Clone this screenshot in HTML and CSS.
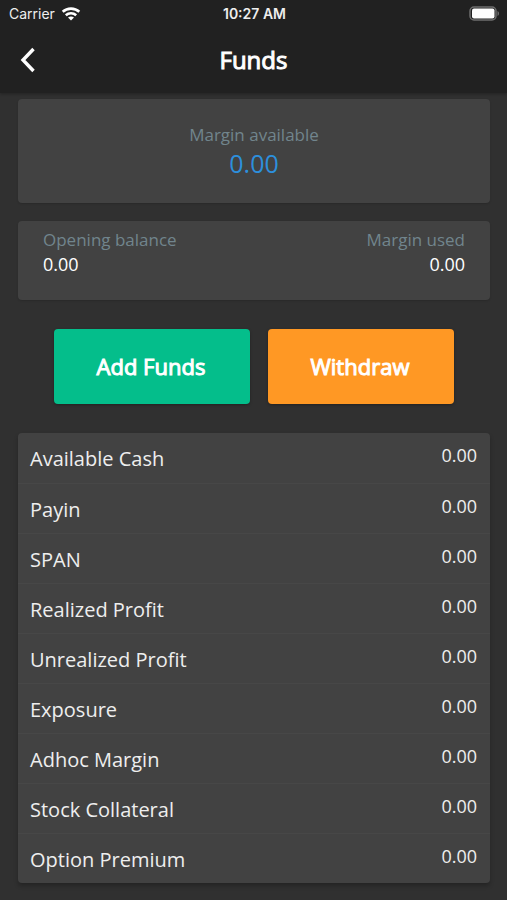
FILE: index.html
```html
<!DOCTYPE html>
<html lang="en">
<head>
<meta charset="utf-8">
<meta name="viewport" content="width=device-width, initial-scale=1">
<title>Funds</title>
<link rel="stylesheet" href="styles.css">
</head>
<body>
<header class="top">
  <div class="status">
    <div class="carrier"><span>Carrier</span>
      <svg width="20" height="14" viewBox="0 0 20 14" fill="none" stroke="#fff" stroke-width="2.6"><path d="M1.700 4.800c4.600-4.300 12-4.300 16.600 0M4.800 8.300c3-2.700 7.400-2.700 10.400 0"/><path d="M10 13.600l-3-3q3-2.400 6 0z" fill="#fff" stroke="none"/></svg>
    </div>
    <span class="clock">10:27 AM</span>
    <svg class="battery" width="31" height="15" viewBox="0 0 31 15"><rect x="1" y="1" width="26" height="13" rx="4" fill="none" stroke="#6e6e6e" stroke-width="1.500"/><rect x="3" y="2.500" width="22.500" height="10" rx="2" fill="#fff"/><path d="M28.500 5c2 .8 2 4.200 0 5z" fill="#6e6e6e"/></svg>
  </div>
  <nav class="bar">
    <button class="back" aria-label="Back"><svg width="16" height="26" viewBox="0 0 16 26" fill="none" stroke="#fff" stroke-width="3.400"><path d="M13.500 2L3 13l10.500 11"/></svg></button>
    <h1>Funds</h1>
  </nav>
</header>
<main>
  <section class="card margin">
    <span class="label">Margin available</span>
    <span class="amount">0.00</span>
  </section>
  <section class="card balances">
    <div><span class="label">Opening balance</span><span class="value">0.00</span></div>
    <div class="right"><span class="label">Margin used</span><span class="value">0.00</span></div>
  </section>
  <div class="actions">
    <button class="add">Add Funds</button>
    <button class="withdraw">Withdraw</button>
  </div>
  <table class="card list">
    <tbody>
      <tr><th scope="row">Available Cash</th><td>0.00</td></tr>
      <tr><th scope="row">Payin</th><td>0.00</td></tr>
      <tr><th scope="row">SPAN</th><td>0.00</td></tr>
      <tr><th scope="row">Realized Profit</th><td>0.00</td></tr>
      <tr><th scope="row">Unrealized Profit</th><td>0.00</td></tr>
      <tr><th scope="row">Exposure</th><td>0.00</td></tr>
      <tr><th scope="row">Adhoc Margin</th><td>0.00</td></tr>
      <tr><th scope="row">Stock Collateral</th><td>0.00</td></tr>
      <tr><th scope="row">Option Premium</th><td>0.00</td></tr>
    </tbody>
  </table>
</main>
</body>
</html>
```
FILE: styles.css
```css
* { box-sizing: border-box; }
body {
  margin: 0;
  min-height: 100vh;
  background: #303030;
  color: #fff;
  font-family: "Open Sans", "Noto Sans", sans-serif;
}
.top { background: #212121; box-shadow: 0 1px 3px rgba(0, 0, 0, .3); }
.status {
  display: grid;
  grid-template-columns: 1fr auto 1fr;
  align-items: center;
  height: 27px;
  padding: 0 7px 0 9px;
  font: 500 14px/20px Inter, sans-serif;
  color: #eee;
}
.carrier { display: flex; align-items: center; gap: 6px; font-weight: 400; }
.clock { font-weight: 600; }
.battery { justify-self: end; }
.bar {
  display: grid;
  grid-template-columns: 1fr auto 1fr;
  align-items: center;
  height: 66px;
  padding: 0 20px;
}
.back { justify-self: start; display: flex; padding: 0; border: 0; background: none; }
h1 { margin: 0; font-size: 24px; line-height: 32px; font-weight: 400; -webkit-text-stroke: 1px #fff; }
main { padding: 6px 17px 17px 18px; }
.card { background: #424242; border-radius: 4px; box-shadow: 0 1px 2px rgba(0, 0, 0, .15); }
.margin {
  display: flex;
  flex-direction: column;
  align-items: center;
  height: 104px;
  padding-top: 24px;
}
.label { color: #71858d; font-size: 17px; line-height: 24px; }
.amount { color: #2d8fdc; font-size: 25px; line-height: 32px; }
.balances {
  display: flex;
  justify-content: space-between;
  height: 79px;
  margin-top: 18px;
  padding: 7px 25px;
}
.balances div { display: flex; flex-direction: column; }
.balances .right { align-items: flex-end; }
.value { font-size: 18px; line-height: 24px; }
.actions { display: flex; gap: 18px; margin: 29px 36px; }
.actions button {
  height: 75px;
  padding: 0 2px 2px 0;
  border: 0;
  border-radius: 4px;
  color: #fff;
  font: 400 22px/30px "Open Sans", sans-serif;
  -webkit-text-stroke: 1px #fff;
  box-shadow: 0 1px 3px rgba(0, 0, 0, .3);
}
.actions .add { flex: 196; background: #04be8b; }
.actions .withdraw { flex: 186; background: #ff9824; }
.list { width: 100%; border-collapse: collapse; color: #eee; box-shadow: 0 3px 4px rgba(0, 0, 0, .25); }
.list th, .list td { height: 50px; padding: 0 13px 0 12px; vertical-align: top; }
.list tr + tr { border-top: 1px solid #474747; }
.list th { padding-top: 12px; text-align: left; font-size: 20px; line-height: 28px; font-weight: 400; }
.list td { padding-top: 10px; text-align: right; font-size: 18px; line-height: 24px; }
```
